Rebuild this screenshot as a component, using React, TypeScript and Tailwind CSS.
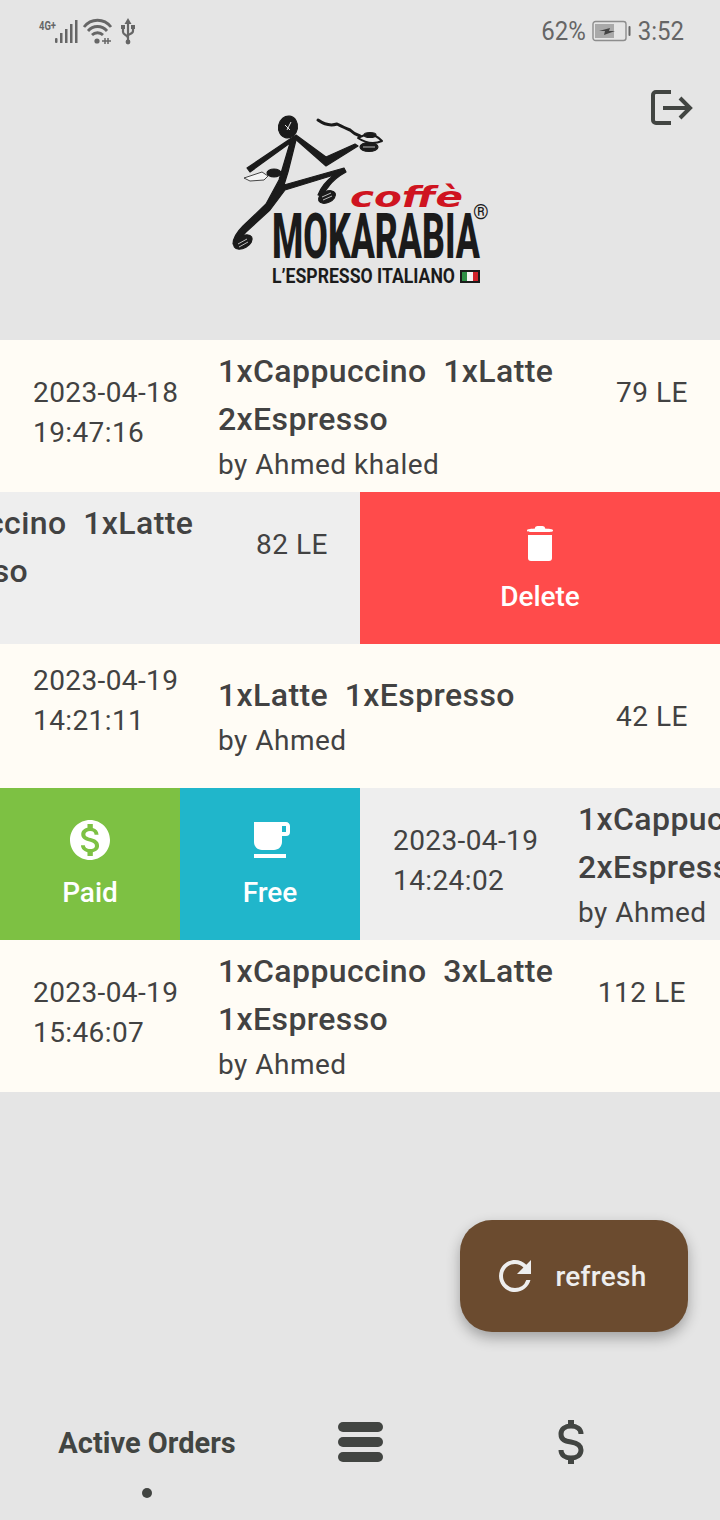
import React from 'react';
import { MdLocalCafe, MdMonetizationOn, MdRefresh } from 'react-icons/md';

interface Order {
  date: string;
  time: string;
  items: string;
  by: string;
  price: string;
  dateClass: string;
  priceClass: string;
}

const orders: Record<string, Order> = {
  first: { date: '2023-04-18', time: '19:47:16', items: '1xCappuccino  1xLatte  2xEspresso', by: 'by Ahmed khaled', price: '79 LE', dateClass: 'pt-[33px]', priceClass: 'pt-[33px] pr-[32px]' },
  second: { date: '2023-04-18', time: '20:02:41', items: '1xCappuccino  1xLatte  2xEspresso', by: 'by Ahmed', price: '82 LE', dateClass: 'pt-[33px]', priceClass: 'pt-[33px] pr-[32px]' },
  third: { date: '2023-04-19', time: '14:21:11', items: '1xLatte  1xEspresso', by: 'by Ahmed', price: '42 LE', dateClass: 'pt-[17px]', priceClass: 'pt-[53px] pr-[32px]' },
  fourth: { date: '2023-04-19', time: '14:24:02', items: '1xCappuccino  1xLatte  2xEspresso', by: 'by Ahmed', price: '65 LE', dateClass: 'pt-[33px]', priceClass: 'pt-[33px] pr-[32px]' },
  fifth: { date: '2023-04-19', time: '15:46:07', items: '1xCappuccino  3xLatte  1xEspresso', by: 'by Ahmed', price: '112 LE', dateClass: 'pt-[33px]', priceClass: 'pt-[33px] pr-[34px]' },
};

const StatusIcons = () => (
  <svg width="100" height="30" viewBox="0 0 100 30" className="text-[#666666]">
    <text x="1" y="15" fontSize="13" fontWeight="700" fontFamily="Roboto, sans-serif" fill="currentColor" textLength="17" lengthAdjust="spacingAndGlyphs">4G+</text>
    <g fill="currentColor">
      <rect x="17" y="23" width="2.5" height="5" rx="1" />
      <rect x="22" y="18" width="2.5" height="10" />
      <rect x="27" y="14" width="2.5" height="14" />
      <rect x="32" y="9" width="2.5" height="19" />
      <rect x="37" y="5" width="2.5" height="23" />
    </g>
    <g fill="none" stroke="currentColor" strokeWidth="2.8">
      <path d="M46 12 C53 3 66 3 73 12" />
      <path d="M50 16 C55 10 64 10 69 16" />
      <path d="M54 20 C57 17 62 17 65 20" />
    </g>
    <circle cx="59" cy="26" r="2.6" fill="currentColor" />
    <path d="M64 26h9M67 23v6M70 23v6" stroke="currentColor" strokeWidth="1.5" />
    <g fill="none" stroke="currentColor" strokeWidth="2.2">
      <path d="M90 7V28" />
      <path d="M85 13v4c0 3 5 3 5 6M95 13v3c0 3-5 3-5 5" />
    </g>
    <path d="M90 3l3.500 6h-7z" fill="currentColor" />
    <rect x="83" y="10" width="4" height="4" fill="currentColor" />
    <rect x="93" y="10" width="4" height="4" fill="currentColor" />
    <circle cx="90" cy="27" r="2.4" fill="currentColor" />
  </svg>
);

const Battery = () => (
  <svg width="40" height="22" viewBox="0 0 40 22">
    <rect x="1" y="1.5" width="33" height="19" rx="2.5" fill="none" stroke="#8d8d8d" strokeWidth="1.4" />
    <rect x="3" y="4" width="19" height="14" fill="#a9a9a9" />
    <rect x="36.5" y="6" width="2" height="10" rx="1" fill="#666666" />
    <path d="M7 11l11-3-1 3h6l-11 4 1-4z" fill="#444444" />
  </svg>
);

// drawn mark with the wordmark kept as live text
const Logo = () => (
  <svg width="280" height="200" viewBox="220 100 280 200">
    <g fill="#1b1b1b" stroke="#1b1b1b" strokeWidth="1.2" strokeLinejoin="round">
      <ellipse cx="288" cy="127" rx="9.5" ry="11" transform="rotate(10 288 127)" />
      <path d="M293 137 L296 140 L288 172 L284 185 L344 168 L346 172 Q335 178 329 186 Q324 192 322 196 L318 195 Q322 184 334 175 L285 190 L270 210 L246 232 Q238 240 238 246 L233 244 Q233 236 243 226 L266 204 L279 180 L290 143 L250 172 L247 168 Z" />
      <path d="M293 137 L296 135 L326 157 L355 144 L358 146 L326 166 Z" />
      <ellipse cx="327" cy="197" rx="9" ry="5.500" transform="rotate(-25 327 197)" />
      <ellipse cx="243" cy="242" rx="10" ry="6" transform="rotate(-30 243 242)" />
      <ellipse cx="274" cy="173" rx="7" ry="4" />
      <ellipse cx="369" cy="147" rx="9" ry="4.500" />
      <path d="M358 138 Q372 130 382 141 Q370 146 358 138Z" fill="none" strokeWidth="2" />
      <ellipse cx="370" cy="135" rx="6" ry="2.500" />
    </g>
    <path d="M285 125l5 5M291 122l-4 8" stroke="#e5e5e5" strokeWidth="1" fill="none" />
    <path d="M322 197l9-4M323 200l9-4M238 244l9-5M239 247l9-5M363 147h12" stroke="#e5e5e5" strokeWidth="0.8" fill="none" />
    <path d="M318 120 Q328 127 337 124 Q345 128 350 130 Q354 134 360 136" fill="none" stroke="#1b1b1b" strokeWidth="3" strokeLinecap="round" />
    <path d="M244 178 L262 172 L268 176 L264 180 L250 181 Z" fill="#f4f4f4" stroke="#1b1b1b" strokeWidth="0.8" />
    <text x="350" y="207" fontFamily="'DejaVu Sans', sans-serif" fontStyle="italic" fontWeight="700" fontSize="29" fill="#cf1420" textLength="113" lengthAdjust="spacingAndGlyphs">coffè</text>
    <text x="272" y="258" fontFamily="Roboto, sans-serif" fontWeight="800" fontSize="63" fill="#1b1b1b" textLength="208" lengthAdjust="spacingAndGlyphs">MOKARABIA</text>
    <text x="272" y="283" fontFamily="Roboto, sans-serif" fontWeight="700" fontSize="21" fill="#1b1b1b" textLength="183" lengthAdjust="spacingAndGlyphs">L’ESPRESSO ITALIANO</text>
    <text x="473" y="219" fontFamily="Roboto, sans-serif" fontSize="20" fill="#1b1b1b">®</text>
    <rect x="460" y="270" width="20" height="13" fill="#1b1b1b" />
    <rect x="462" y="272" width="5" height="9" fill="#2f8f46" />
    <rect x="467" y="272" width="6" height="9" fill="#f4f4f4" />
    <rect x="473" y="272" width="5" height="9" fill="#d0232b" />
  </svg>
);

const OrderContent = ({ order, muted }: { order: Order; muted?: boolean }) => (
  <div className={`flex w-[720px] shrink-0 text-[#424242] ${muted ? 'bg-[#eeeeee]' : 'bg-[#fffcf5]'}`}>
    <div className={`w-[218px] shrink-0 pl-[33px] text-[28px] leading-[40px] tracking-[0.4px] ${order.dateClass}`}>
      <p>{order.date}</p>
      <p>{order.time}</p>
    </div>
    <div className="w-[379px] shrink-0 self-center pt-[1px]">
      <p className="whitespace-pre-wrap text-[32px] font-medium leading-[48px] tracking-[0.4px]">{order.items}</p>
      <p className="mt-[1px] text-[28px] leading-[42px] tracking-[0.5px]">{order.by}</p>
    </div>
    <div className={`flex-1 text-right text-[28px] leading-[40px] tracking-[0.5px] whitespace-nowrap ${order.priceClass}`}>{order.price}</div>
  </div>
);

const ActionButton = ({ label, color, icon }: { label: string; color: string; icon: React.ReactNode }) => (
  <div className={`flex shrink-0 flex-col items-center justify-center text-white ${color}`}>
    <div className="flex h-[48px] items-center justify-center">{icon}</div>
    <span className="mt-[9px] text-[28px] font-medium leading-[40px]">{label}</span>
  </div>
);

export default function App() {
  return (
    <div className="flex h-[1520px] w-[720px] flex-col overflow-hidden bg-[#e5e5e5] font-['Roboto',sans-serif]">
      {/* Status bar + logo */}
      <div className="h-[340px] shrink-0">
        <div className="flex h-[62px] items-start justify-between pl-[38px] pr-[36px] pt-[15px]">
          <StatusIcons />
          <div className="flex items-center gap-[6px] pt-[1px] text-[24px] leading-[30px] text-[#666666]">
            <span className="inline-block scale-y-110">62%</span>
            <Battery />
            <span className="inline-block scale-y-110">3:52</span>
          </div>
        </div>
        <div className="flex justify-end pr-[26px] pt-[27px]">
          <svg width="44" height="40" viewBox="0 0 44 40" fill="none" stroke="#424542" strokeWidth="4">
            <path d="M21 3H6a3 3 0 0 0-3 3v25a3 3 0 0 0 3 3h15" />
            <path d="M13 19h27" />
            <path d="M30 9l10 10-10 10" />
          </svg>
        </div>
        <div className="-mt-[29px] flex justify-center">
          <Logo />
        </div>
      </div>

      {/* Orders */}
      <div className="flex h-[152px] shrink-0 overflow-hidden">
        <OrderContent order={orders.first} />
      </div>
      <div className="flex h-[152px] shrink-0 justify-end overflow-hidden">
        <OrderContent order={orders.second} muted />
        <ActionButton
          label="Delete"
          color="w-[360px] bg-[#ff4b4b]"
          icon={
            <svg width="30" height="40" viewBox="0 0 30 40" fill="white">
              <path d="M2 6.500C2 5 4 5 10 4.500 10 2.500 11 2 15 2s5 .5 5 2.500C26 5 28 5 28 6.500 28 8 27 8 15 8S2 8 2 6.500Z" />
              <path d="M3 11h24v23a3 3 0 0 1-3 3H6a3 3 0 0 1-3-3Z" />
            </svg>
          }
        />
      </div>
      <div className="flex h-[144px] shrink-0 overflow-hidden">
        <OrderContent order={orders.third} />
      </div>
      <div className="flex h-[152px] shrink-0 overflow-hidden">
        <ActionButton label="Paid" color="w-[180px] bg-[#7dc143]" icon={<MdMonetizationOn size={48} />} />
        <ActionButton label="Free" color="w-[180px] bg-[#20b6cb]" icon={<MdLocalCafe size={48} />} />
        <OrderContent order={orders.fourth} muted />
      </div>
      <div className="flex h-[152px] shrink-0 overflow-hidden">
        <OrderContent order={orders.fifth} />
      </div>

      {/* Refresh */}
      <div className="flex justify-end pr-[32px] pt-[128px]">
        <button className="flex h-[112px] w-[228px] items-center justify-center gap-[16px] rounded-[32px] bg-[#6b4b2f] pr-[10px] text-[#eeeeee] shadow-[0_6px_14px_rgba(0,0,0,0.3)]">
          <MdRefresh size={48} />
          <span className="pt-[2px] text-[28px] font-medium leading-[44px] tracking-[0.3px]">refresh</span>
        </button>
      </div>

      {/* Bottom nav */}
      <div className="mt-auto grid h-[120px] grid-cols-[294px_132px_290px] items-start text-[#424542]">
        <div className="flex flex-col items-center pt-[25px]">
          <span className="text-[29px] font-bold leading-[36px]">Active Orders</span>
          <span className="mt-[27px] h-[10px] w-[10px] rounded-full bg-[#424542]" />
        </div>
        <div className="flex flex-col items-center gap-[5px] pt-[22px]">
          <span className="h-[10px] w-[45px] rounded-full bg-[#424542]" />
          <span className="h-[10px] w-[45px] rounded-full bg-[#424542]" />
          <span className="h-[10px] w-[45px] rounded-full bg-[#424542]" />
        </div>
        <div className="flex justify-center pt-[19px]">
          <svg width="28" height="46" viewBox="0 0 28 46" fill="none" stroke="#424542">
            <path strokeWidth="5" d="M24 15c0-5-4-8-10-8S4 10 4 15c0 6 4 7 10 8s10 3 10 8c0 5-4 8-10 8S4 36 4 31" />
            <path strokeWidth="6" d="M14 1v6M14 39v6" />
          </svg>
        </div>
      </div>
    </div>
  );
}
